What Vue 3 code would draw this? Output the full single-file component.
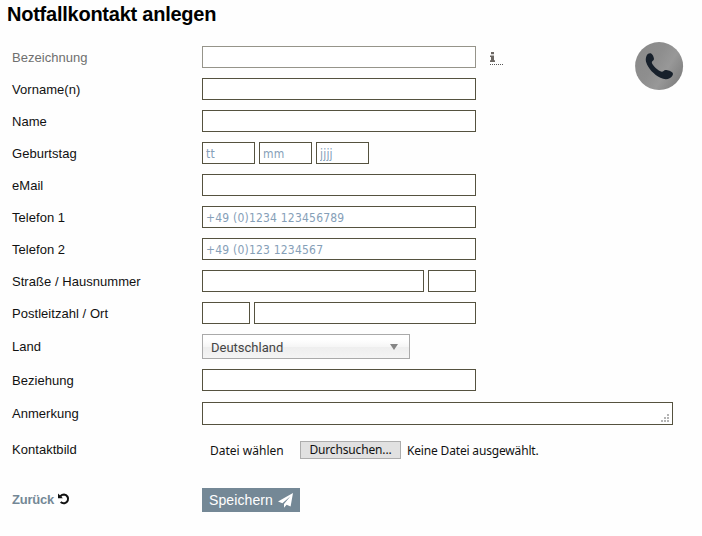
<template>
  <div class="page">
    <h1>Notfallkontakt anlegen</h1>

    <form class="kontakt" @submit.prevent>
      <div v-for="row in rows" :key="row.label" class="row" :class="row.type && `row-${row.type}`">
        <label :class="{ muted: row.disabled, wide: row.wide }">{{ row.label }}</label>

        <div v-if="row.type === 'select'" class="select">
          <span>Deutschland</span>
          <svg width="8" height="6" viewBox="0 0 8 6"><path d="M0 0h8L4 6z" fill="#858585" /></svg>
        </div>

        <div v-else-if="row.type === 'area'" class="area">
          <svg width="8" height="8" viewBox="0 0 8 8" fill="#b4b4b4">
            <path d="M6 0h2v2H6zM3 3h2v2H3zM6 3h2v2H6zM0 6h2v2H0zM3 6h2v2H3zM6 6h2v2H6z" />
          </svg>
        </div>

        <div v-else-if="row.type === 'file'" class="upload">
          <span class="choose">Datei wählen</span>
          <button type="button">Durchsuchen...</button>
          <span class="nofile">Keine Datei ausgewählt.</span>
        </div>

        <div v-else class="fields">
          <input
            v-for="(field, i) in row.fields"
            :key="i"
            type="text"
            :class="[field.size, { disabled: row.disabled }]"
            :placeholder="field.hint"
            :disabled="row.disabled"
          />
        </div>

        <span v-if="row.disabled" class="info">
          <svg width="6" height="10" viewBox="0 0 6 10" fill="#6b6662">
            <path d="M1 0h3v2.2H1zM0 3.4h4v4.8h1V10H0V8.2h1V5.1H0z" />
          </svg>
        </span>
      </div>

      <div class="actions">
        <a href="#" class="back">
          <span>Zurück</span>
          <svg width="12" height="12" viewBox="0 0 12 12">
            <path d="M2.4 3.2C3.6 1.9 4.7 1.5 6 1.5a4.4 4.4 0 1 1-3.3 7.6" fill="none" stroke="#111" stroke-width="2.1" />
            <path d="M0 .4v4.9h4.9z" fill="#111" />
          </svg>
        </a>
        <button type="submit" class="save">
          <span>Speichern</span>
          <svg width="15" height="15" viewBox="0 0 15 15" fill="#fff">
            <path d="M15 0 12.6 13.5 8.6 11.8 6 14.8V11L12.4 3.2 4.4 10.2 0 8.4z" />
          </svg>
        </button>
      </div>
    </form>

    <svg class="phone" width="49" height="49" viewBox="0 0 49 49">
      <defs>
        <linearGradient id="metal" x1="0" y1=".2" x2="1" y2=".8">
          <stop offset="0" stop-color="#8a8a8a" />
          <stop offset=".4" stop-color="#8e8e8e" />
          <stop offset=".65" stop-color="#989898" />
          <stop offset="1" stop-color="#7c7c7c" />
        </linearGradient>
      </defs>
      <circle cx="24.1" cy="24.1" r="24" fill="url(#metal)" />
      <path
        d="M11.8 13.3C12.6 11.6 14.6 10.7 16.2 11.4C17.6 12.2 18.9 15 19 17C19 18.7 16.8 19.1 16.8 20.3C17.2 23.8 23.4 29.1 26.8 29.8C28.3 29.9 28.8 28.2 30.5 28.1C32.8 28.1 36.6 29.4 37.6 30.8C38.8 32.6 36.8 35.1 34.6 36.3C31.8 37.8 28.5 37.3 25.4 35.8C19 32.8 13.1 26.5 11.1 20.1C10.5 17.9 10.7 15.5 11.8 13.3Z"
        fill="#17202b"
      />
    </svg>
  </div>
</template>

<script setup>
const rows = [
  { label: 'Bezeichnung', disabled: true, fields: [{ size: 'full' }] },
  { label: 'Vorname(n)', fields: [{ size: 'full' }] },
  { label: 'Name', fields: [{ size: 'full' }] },
  {
    label: 'Geburtstag',
    fields: [
      { size: 'date', hint: 'tt' },
      { size: 'date', hint: 'mm' },
      { size: 'date', hint: 'jjjj' }
    ]
  },
  { label: 'eMail', fields: [{ size: 'full' }] },
  { label: 'Telefon 1', fields: [{ size: 'full', hint: '+49 (0)1234 123456789' }] },
  { label: 'Telefon 2', fields: [{ size: 'full', hint: '+49 (0)123 1234567' }] },
  { label: 'Straße / Hausnummer', fields: [{ size: 'long' }, { size: 'short' }] },
  { label: 'Postleitzahl / Ort', wide: true, fields: [{ size: 'short' }, { size: 'long' }] },
  { label: 'Land', type: 'select' },
  { label: 'Beziehung', fields: [{ size: 'full' }] },
  { label: 'Anmerkung', type: 'area' },
  { label: 'Kontaktbild', type: 'file' }
]
</script>

<style>
body {
  background: #fefefe;
}
</style>

<style scoped>
.page {
  position: relative;
  width: 702px;
  height: 536px;
  overflow: hidden;
  box-sizing: border-box;
  padding: 3px 0 0 7px;
  background: #fefefe;
  font-family: "Liberation Sans", Arial, sans-serif;
  font-size: 13px;
  color: #111;
}

h1 {
  margin: 0;
  font-size: 20px;
  line-height: 23px;
  height: 43px;
  letter-spacing: -0.24px;
  color: #000;
  box-sizing: border-box;
}

.kontakt {
  display: flex;
  flex-direction: column;
  padding-left: 5px;
}

.row {
  display: flex;
  align-items: center;
  height: 22px;
  margin-bottom: 10px;
}

.row-select {
  height: 25px;
}

.row-area {
  height: 23px;
  margin: 1px 0 16px;
}

.row-file {
  height: 18px;
  margin-bottom: 29px;
}

label {
  width: 190px;
  flex: none;
  padding-top: 2px;
  line-height: 22px;
  letter-spacing: 0.04px;
}

.row-select label,
.row-area label,
.row-file label {
  padding-top: 0;
}

.wide {
  letter-spacing: 0.04px;
}

.muted {
  color: #6f6f6f;
}

.fields {
  display: flex;
  gap: 4px;
}

input {
  box-sizing: border-box;
  height: 22px;
  margin: 0;
  padding: 1px 3px 0;
  border: 1px solid #55523f;
  border-radius: 0;
  background: #fff;
  font-family: "DejaVu Sans Condensed", "DejaVu Sans", sans-serif;
  font-stretch: condensed;
  font-size: 12px;
  letter-spacing: 0.2px;
}

input::placeholder {
  color: #86a0b8;
  opacity: 1;
}

input.disabled {
  border-color: #96948a;
}

.full {
  width: 274px;
}

.date {
  width: 53px;
}

.long {
  width: 222px;
}

.short {
  width: 48px;
}

.info {
  width: 13px;
  height: 12px;
  margin: 2px 0 0 14px;
  border-bottom: 1px dotted #555;
}

.info svg {
  display: block;
}

.select {
  display: flex;
  align-items: center;
  justify-content: space-between;
  box-sizing: border-box;
  width: 208px;
  height: 25px;
  padding: 0 11px 0 8px;
  border: 1px solid #aaa;
  background: linear-gradient(#fff 20%, #f6f6f6 50%, #eee 52%, #f4f4f4 100%);
  font-family: Roboto, sans-serif;
  color: #444;
}

.select span {
  padding-top: 2px;
}

.area {
  display: flex;
  align-items: flex-end;
  justify-content: flex-end;
  box-sizing: border-box;
  width: 471px;
  height: 23px;
  padding: 2px 3px;
  border: 1px solid #55523f;
  background: #fff;
}

.upload {
  display: flex;
  align-items: center;
  font-family: "Noto Sans", sans-serif;
  font-size: 12px;
}

.choose {
  width: 90px;
  padding-left: 8px;
  box-sizing: border-box;
}

.upload button {
  width: 101px;
  height: 18px;
  padding: 0;
  margin: 0 6px 0 8px;
  border: 1px solid #adadad;
  background: #e1e1e1;
  font: inherit;
  line-height: 16px;
  letter-spacing: -0.15px;
  color: #111;
}

.nofile {
  letter-spacing: -0.17px;
}

.actions {
  display: flex;
  align-items: center;
  height: 24px;
}

.back {
  display: flex;
  align-items: center;
  gap: 4px;
  width: 190px;
  padding-bottom: 2px;
  font-weight: bold;
  letter-spacing: -0.2px;
  color: #748896;
  text-decoration: none;
}

.save {
  display: flex;
  align-items: center;
  justify-content: space-between;
  width: 98px;
  height: 24px;
  padding: 0 7px;
  border: 0;
  background: #748896;
  font-family: inherit;
  font-size: 14px;
  letter-spacing: 0.1px;
  color: #fff;
}

.phone {
  position: absolute;
  left: 635px;
  top: 42px;
}
</style>
